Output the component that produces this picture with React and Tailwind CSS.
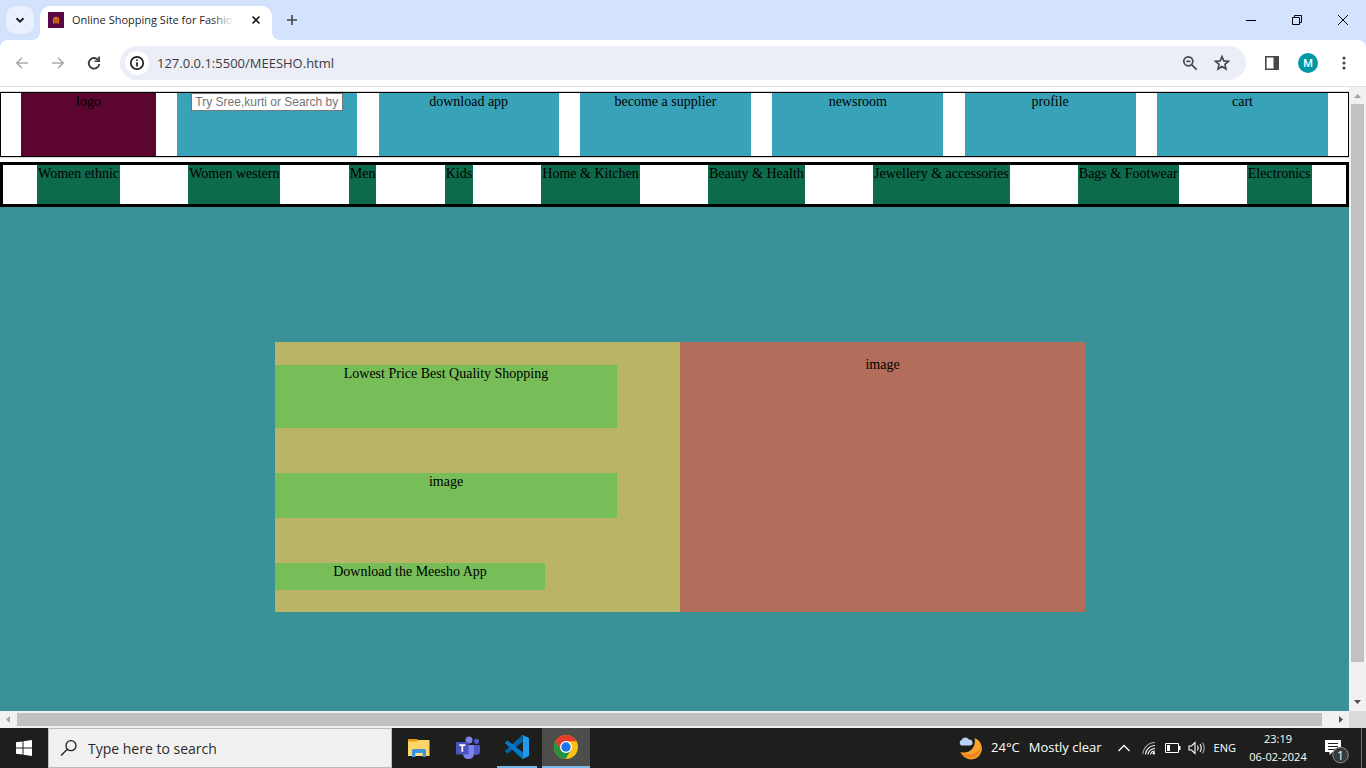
const topLinks = ["become a supplier", "newsroom", "profile", "cart"];

const categories = [
  "Women ethnic",
  "Women western",
  "Men",
  "Kids",
  "Home & Kitchen",
  "Beauty & Health",
  "Jewellery & accessories",
  "Bags & Footwear",
  "Electronics",
];

function TabStrip() {
  return (
    <div className="flex h-10 shrink-0 items-end bg-[#d3e3fd] pl-[6px]">
      <button aria-label="Search tabs" className="mb-[6px] flex size-7 items-center justify-center rounded-[10px] bg-[#e9f1fe]">
        <svg width="28" height="28" viewBox="0 0 28 28" fill="none" stroke="#1f1f1f" strokeWidth="2">
          <path d="M10.5 12.2 14 15.7l3.5-3.5" />
        </svg>
      </button>
      <svg className="ml-[-2px] shrink-0" width="8" height="8" viewBox="0 0 8 8">
        <path d="M8 0v8H0a8 8 0 0 0 8-8z" fill="#fff" />
      </svg>
      <div className="flex h-[34px] w-[232px] items-center rounded-t-[10px] bg-white px-2 pb-[6px]">
        <svg width="16" height="16" viewBox="0 0 16 16" className="shrink-0">
          <rect width="16" height="16" fill="#570a45" />
          <path d="M5 11.5V7.2Q5 5 6.900 5h2.200Q11 5 11 7.200v4.300z" fill="#a94f1e" />
          <path d="M5.500 11.500V7Q5.700 5.500 7 5.500q1 0 1 1.300Q8 5.500 9.200 5.500q1.200 0 1.300 1.500v4.500M8 6.500v4" fill="none" stroke="#f08c12" strokeWidth=".8" />
        </svg>
        <span className="relative ml-2 whitespace-nowrap font-['Open_Sans',sans-serif] text-[11px] leading-4 text-[#1f1f1f]">
          Online Shopping Site for Fashio
          <span className="absolute right-0 top-0 h-4 w-5 bg-gradient-to-r from-transparent to-white/90" />
        </span>
        <button aria-label="Close tab" className="ml-auto flex size-4 shrink-0 items-center justify-center">
          <svg width="16" height="16" viewBox="0 0 16 16" stroke="#1f1f1f" strokeWidth="1.700">
            <path d="m4.500 4.500 7 7m0-7-7 7" />
          </svg>
        </button>
      </div>
      <svg className="shrink-0" width="8" height="8" viewBox="0 0 8 8">
        <path d="M0 0v8h8a8 8 0 0 1-8-8z" fill="#fff" />
      </svg>
      <button aria-label="New tab" className="mb-[12px] ml-1">
        <svg width="16" height="16" viewBox="0 0 16 16" stroke="#474747" strokeWidth="1.600">
          <path d="M8 3v10M3 8h10" />
        </svg>
      </button>
      <div className="ml-auto flex h-10">
        <button aria-label="Minimize" className="flex w-[46px] items-center justify-center">
          <svg width="12" height="12" viewBox="0 0 12 12" stroke="#000"><path d="M1 6.500h10" /></svg>
        </button>
        <button aria-label="Restore" className="flex w-[46px] items-center justify-center">
          <svg width="12" height="12" viewBox="0 0 12 12" fill="none" stroke="#000">
            <path d="M1.500 3.500h7v7h-7zM3.500 3.500v-2h7v7h-2" />
          </svg>
        </button>
        <button aria-label="Close" className="flex w-[46px] items-center justify-center">
          <svg width="12" height="12" viewBox="0 0 12 12" stroke="#000"><path d="m1 1 10 10m0-10L1 11" /></svg>
        </button>
      </div>
    </div>
  );
}

function Toolbar() {
  return (
    <div className="shrink-0 bg-[#d3e3fd]">
      <div className="flex h-[47px] items-center rounded-t-lg border-b border-[#e1e3e1] bg-white px-3">
        <button aria-label="Back">
          <svg width="20" height="20" viewBox="0 0 20 20" fill="none" stroke="#aaa" strokeWidth="1.600">
            <path d="M15.800 10H5M10 4.700 4.700 10l5.300 5.300" />
          </svg>
        </button>
        <button aria-label="Forward" className="ml-4">
          <svg width="20" height="20" viewBox="0 0 20 20" fill="none" stroke="#aaa" strokeWidth="1.600">
            <path d="M4.200 10H15M10 4.700l5.300 5.300-5.300 5.300" />
          </svg>
        </button>
        <button aria-label="Reload" className="ml-4">
          <svg width="20" height="20" viewBox="0 0 20 20">
            <path d="M14.600 7.600A5.300 5.300 0 1 0 15.300 11" fill="none" stroke="#3c3c3c" strokeWidth="1.900" />
            <path d="M16 3.500V9h-5.500V7.500h3.800V3.500z" fill="#3c3c3c" />
          </svg>
        </button>
        <div className="ml-4 flex h-[34px] min-w-0 flex-1 items-center rounded-full bg-[#ebeef7] pl-[5px] pr-[14px]">
          <button aria-label="Site information" className="flex size-6 shrink-0 items-center justify-center rounded-full bg-white">
            <svg width="16" height="16" viewBox="0 0 16 16">
              <circle cx="8" cy="8" r="6.200" fill="none" stroke="#1f1f1f" strokeWidth="1.700" />
              <path d="M8 7.200v4.200M8 4.400v1.500" stroke="#1f1f1f" strokeWidth="1.700" />
            </svg>
          </button>
          <input
            aria-label="Address"
            defaultValue="127.0.0.1:5500/MEESHO.html"
            className="ml-2 h-6 min-w-0 flex-1 bg-transparent font-['Open_Sans',sans-serif] text-[13px] text-[#3a3c40] outline-none"
          />
          <button aria-label="Zoom">
            <svg width="20" height="20" viewBox="0 0 20 20" fill="none" stroke="#474747" strokeWidth="1.700">
              <circle cx="8.300" cy="8.300" r="4.500" />
              <path d="m11.600 11.600 5 5M6.300 8.300h4" />
            </svg>
          </button>
          <button aria-label="Bookmark this tab" className="ml-3">
            <svg width="20" height="20" viewBox="0 0 20 20" fill="none" stroke="#474747" strokeWidth="1.600">
              <path d="m10 3.600 1.800 4.300 4.700.4-3.600 3.100 1.100 4.600-4-2.500L6 16l1.100-4.600-3.600-3.100 4.700-.4z" />
            </svg>
          </button>
        </div>
        <button aria-label="Side panel" className="ml-4">
          <svg width="20" height="20" viewBox="0 0 20 20">
            <path d="M3.800 3.800h12.400v12.400H3.800z" fill="none" stroke="#474747" strokeWidth="1.600" />
            <path d="M11.500 3.500H16.500v13h-5z" fill="#474747" />
          </svg>
        </button>
        <button aria-label="Profile" className="ml-4 flex size-5 items-center justify-center rounded-full bg-[#0097a7] font-['Roboto',sans-serif] text-[11px] font-medium leading-none text-white">
          M
        </button>
        <button aria-label="Menu" className="ml-4">
          <svg width="20" height="20" viewBox="0 0 20 20" fill="#474747">
            <circle cx="10" cy="5" r="1.600" />
            <circle cx="10" cy="10" r="1.600" />
            <circle cx="10" cy="15" r="1.600" />
          </svg>
        </button>
      </div>
    </div>
  );
}

function ShopPage() {
  return (
    <div className="flex min-h-0 flex-1 flex-col overflow-hidden bg-white pt-[5px] font-['Liberation_Serif',serif] text-[14px] leading-[17px] text-black">
      <header className="flex h-[65px] shrink-0 justify-between border border-black px-5 text-center shadow-[0_0_1px_#000]">
        <div className="w-[135px] bg-[#5c062f]">logo</div>
        <div className="flex w-[180px] items-start justify-center bg-[#38a3b8]">
          <input
            type="text"
            aria-label="Search products"
            placeholder="Try Sree,kurti or Search by"
            className="h-[18px] w-[152px] border border-[#767676] bg-white px-[3px] font-['Liberation_Sans',sans-serif] text-[12px] leading-4 placeholder:text-[#757575]"
          />
        </div>
        <a href="#app" className="w-[180px] bg-[#38a3b8]">download app</a>
        {topLinks.map((label) => (
          <a key={label} href="#top" className="w-[171px] bg-[#38a3b8]">{label}</a>
        ))}
      </header>
      <nav className="mt-[5px] flex h-[45px] shrink-0 justify-around border-[3px] border-black">
        {categories.map((label) => (
          <a key={label} href="#category" className="whitespace-nowrap bg-[#0d6a4b] px-px">{label}</a>
        ))}
      </nav>
      <main className="flex flex-1 items-start justify-center bg-[#3a9198] pl-[11px] pt-[135px]">
        <section className="flex h-[270px] w-[810px] text-center">
          <div className="flex w-1/2 flex-col justify-around bg-[#b9b466]">
            <div className="h-[63px] w-[342px] bg-[#77be58]">Lowest Price Best Quality Shopping</div>
            <div className="h-[45px] w-[342px] bg-[#77be58]">image</div>
            <a href="#download" className="h-[27px] w-[270px] bg-[#77be58]">Download the Meesho App</a>
          </div>
          <div className="w-1/2 bg-[#b26e5a] pt-[14px]">image</div>
        </section>
      </main>
    </div>
  );
}

function HorizontalScrollbar() {
  return (
    <div className="flex h-[17px] shrink-0 items-center bg-[#f1f1f1]">
      <svg width="17" height="17" viewBox="0 0 17 17" className="shrink-0"><path d="M10 5v7L6 8.500z" fill="#a3a3a3" /></svg>
      <div className="mr-[10px] h-[13px] flex-1 bg-[#c1c1c1]" />
      <svg width="17" height="17" viewBox="0 0 17 17" className="shrink-0"><path d="M7 5v7l4-3.500z" fill="#505050" /></svg>
    </div>
  );
}

function VerticalScrollbar() {
  return (
    <div className="flex w-[17px] shrink-0 flex-col items-center bg-[#f1f1f1]">
      <svg width="17" height="17" viewBox="0 0 17 17" className="shrink-0"><path d="M5 11h7L8.500 7z" fill="#a3a3a3" /></svg>
      <div className="mb-8 w-[13px] flex-1 bg-[#c1c1c1]" />
      <svg width="17" height="17" viewBox="0 0 17 17" className="shrink-0"><path d="M5 6h7l-3.500 4z" fill="#505050" /></svg>
      <div className="size-[17px] shrink-0 bg-[#dcdcdc]" />
    </div>
  );
}

function Taskbar() {
  return (
    <footer className="flex h-10 shrink-0 items-center bg-[#1e1f1c] font-['Open_Sans',sans-serif] text-white">
      <button aria-label="Start" className="flex h-10 w-12 items-center justify-center">
        <svg width="16" height="16" viewBox="0 0 16 16" fill="#fff">
          <path d="M0 2.300 6.500 1.400V7.500H0zM7.500 1.200 16 0v7.500H7.500zM0 8.500h6.500v6.100L0 13.700zM7.500 8.500H16V16l-8.500-1.200z" />
        </svg>
      </button>
      <div className="flex h-10 w-[344px] items-center border border-[#bdbdbd] bg-[#f1f1f1] pl-[11px]">
        <svg width="18" height="18" viewBox="0 0 18 18" fill="none" stroke="#1f1f1f" strokeWidth="1.300">
          <circle cx="11" cy="6.700" r="5" />
          <path d="M7.400 10.300 1 16.500" />
        </svg>
        <input
          aria-label="Search Windows"
          placeholder="Type here to search"
          className="ml-[10px] min-w-0 flex-1 bg-transparent text-[14px] outline-none placeholder:text-[#2b2b2b]"
        />
      </div>
      <button aria-label="File Explorer" className="ml-[3px] flex h-10 w-12 items-center justify-center">
        <svg width="24" height="24" viewBox="0 0 24 24">
          <path d="M1 3h8.500l1.500 1H22.500v16H1z" fill="#fdd667" />
          <path d="M1 3h8.500l1 2.500H1z" fill="#e39c0c" />
          <path d="M5 21v-6.500Q5 13 6.500 13h11q1.500 0 1.500 1.500V21h-3.500v-4h-7v4z" fill="#3a95dc" />
          <path d="M8.500 17h7v3h-7z" fill="#fbe08d" />
        </svg>
      </button>
      <button aria-label="Teams" className="flex h-10 w-[50px] items-center justify-center">
        <svg width="24" height="24" viewBox="0 0 24 24">
          <circle cx="20.500" cy="5.300" r="2.600" fill="#5059c9" />
          <circle cx="13" cy="4" r="3.500" fill="#7b83eb" />
          <path d="M17 9h6.200q.8 0 .8.800V15q0 4-3.800 4-2.200 0-3.200-1.800z" fill="#5059c9" />
          <path d="M8 9h10v8q0 6-5.500 6T7 17z" fill="#7b83eb" />
          <rect x="0" y="6" width="12.500" height="12.500" rx="1" fill="#4b53bc" />
          <path d="M3.300 9.200h6M6.300 9.200v6.500" stroke="#fff" strokeWidth="1.700" />
        </svg>
      </button>
      <button aria-label="Visual Studio Code" className="mx-[4px] flex h-10 w-10 items-center justify-center border-b-2 border-[#76b9ed]">
        <svg width="24" height="24" viewBox="0 0 24 24">
          <path d="M17.500 0 18 6.500 2.500 18.500.3 16.800q-.6-.6 0-1.200z" fill="#0065a9" />
          <path d="M17.500 24 18 17.500 2.500 5.500.3 7.200q-.6.600 0 1.200z" fill="#007acc" />
          <path d="m17.500 24-1-1.200q1.500.7 1.500-1V2.200q0-1.700-1.500-1l1-1.200L23 2.500q1 .4 1 1.500v16q0 1.100-1 1.500z" fill="#1f9cf0" />
        </svg>
      </button>
      <button aria-label="Google Chrome" className="ml-px flex h-10 w-12 items-center justify-center border-b-2 border-[#76b9ed] bg-[#4d4e4b]">
        <svg width="24" height="24" viewBox="0 0 24 24">
          <circle cx="12" cy="12" r="12" fill="#fbc116" />
          <path d="M1.600 6A12 12 0 0 0 11.500 24L17 15 12 12 7 15z" fill="#229342" />
          <path d="M1.600 6 7 15 12 6.200H22.400A12 12 0 0 0 1.600 6z" fill="#e33b2e" />
          <circle cx="12" cy="12" r="6" fill="#fff" />
          <circle cx="12" cy="12" r="4.700" fill="#1a73e8" />
        </svg>
      </button>
      <div className="ml-auto flex h-10 items-center">
        <button className="flex items-center whitespace-nowrap text-[13px]">
          <svg width="24" height="24" viewBox="0 0 24 24" className="mr-[9px]">
            <path d="M16.500 2A11 11 0 1 1 2.500 16Q10 18 14.500 12.500 18 8 16.500 2z" fill="#f5a32c" />
            <path d="M22.800 13A11 11 0 0 1 2.500 16.500Q12 22 22.800 13z" fill="#ee8322" />
            <path d="M3.500 9.500a3 3 0 0 1 0-5.500A4.200 4.200 0 0 1 11 3.500a3 3 0 0 1 1 6z" fill="#b9d2f7" />
          </svg>
          <span>24°C</span>
          <span className="ml-[9px]">Mostly clear</span>
        </button>
        <button aria-label="Show hidden icons" className="ml-4">
          <svg width="12" height="12" viewBox="0 0 12 12" fill="none" stroke="#fff" strokeWidth="1.300"><path d="m.5 9 5.500-5.500L11.500 9" /></svg>
        </button>
        <button aria-label="Network" className="ml-3">
          <svg width="14" height="14" viewBox="0 0 14 14" fill="none" stroke="#fff" strokeWidth="1.100">
            <path d="M1 13A12 12 0 0 1 13 1.500" stroke="#aaa" />
            <path d="M3.500 13.500A9.500 9.500 0 0 1 13 4.500M6 13.500A7 7 0 0 1 13 7.500M8.500 13.500A4.500 4.500 0 0 1 13 10" />
            <circle cx="11.800" cy="12.200" r="1.200" fill="#fff" stroke="none" />
          </svg>
        </button>
        <button aria-label="Battery" className="ml-[9px]">
          <svg width="16" height="10" viewBox="0 0 16 10">
            <path d="M.5.500h13v9H.500z" fill="none" stroke="#fff" />
            <path d="M2 2h3v6H2zM14 3h1.500v4H14z" fill="#fff" />
          </svg>
        </button>
        <button aria-label="Volume" className="ml-[7px]">
          <svg width="18" height="14" viewBox="0 0 18 14" fill="none" stroke="#fff" strokeWidth="1.100">
            <path d="M1 5h2.500L7 1.500v11L3.500 9H1z" />
            <path d="M9.500 4.500q1.500 2.500 0 5M12 3q2.500 4 0 8" />
            <path d="M14.500 1.500q3.500 5.500 0 11" stroke="#aaa" />
          </svg>
        </button>
        <button aria-label="Language" className="ml-2 text-[11px]">ENG</button>
        <button className="ml-[11px] w-[62px] whitespace-nowrap text-center text-[11px] leading-[18px]">
          <span className="block">23:19</span>
          <span className="block">06-02-2024</span>
        </button>
        <button aria-label="Notifications" className="ml-[15px] mr-[11px] mt-2">
          <svg width="26" height="26" viewBox="0 0 26 26">
            <path d="M1 1h16v12H8.500L5.500 16v-3H1z" fill="#fff" />
            <path d="M4 4.500h10M4 7.500h10M4 10.500h7" stroke="#1e1f1c" />
            <circle cx="16.500" cy="16" r="7.800" fill="#3a3a3a" stroke="#8a8a8a" />
            <text x="16.500" y="20.500" textAnchor="middle" fontSize="12" fill="#fff">1</text>
          </svg>
        </button>
        <div className="mr-1 h-10 w-px bg-[#6d6d6b]" />
      </div>
    </footer>
  );
}

export default function App() {
  return (
    <div className="flex h-screen flex-col overflow-hidden">
      <TabStrip />
      <Toolbar />
      <div className="flex min-h-0 flex-1">
        <div className="flex min-w-0 flex-1 flex-col">
          <ShopPage />
          <HorizontalScrollbar />
        </div>
        <VerticalScrollbar />
      </div>
      <Taskbar />
    </div>
  );
}
